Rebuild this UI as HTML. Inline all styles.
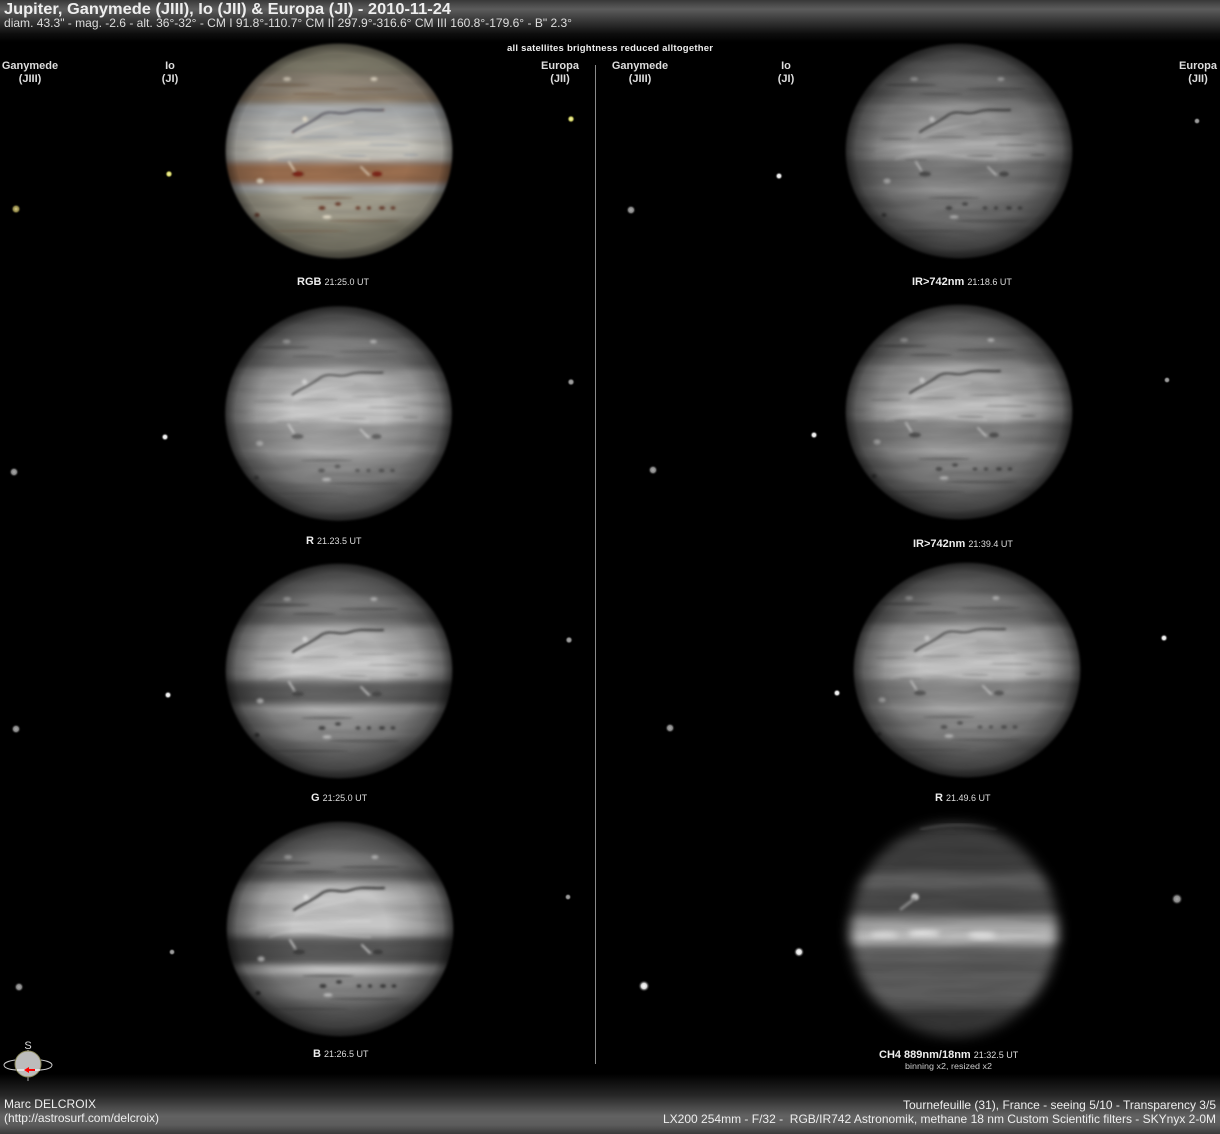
<!DOCTYPE html>
<html><head><meta charset="utf-8"><title>Jupiter, Ganymede, Io &amp; Europa - 2010-11-24</title>
<style>
html,body{margin:0;padding:0;background:#000;width:1220px;height:1134px;overflow:hidden}
svg{display:block}
text{font-family:"Liberation Sans",sans-serif;fill:#eee;white-space:pre}
.b{font-weight:bold}
.l{font-size:11px;font-weight:bold;text-anchor:middle;fill:#ddd}
.c{font-size:11px;font-weight:bold;fill:#eee}
.t{font-size:9px;font-weight:normal;fill:#ddd}
</style></head><body>
<svg xmlns="http://www.w3.org/2000/svg" width="1220" height="1134" viewBox="0 0 1220 1134">
<defs>
<linearGradient id="hd" x1="0" y1="0" x2="0" y2="1">
<stop offset="0" stop-color="#383838"/><stop offset=".22" stop-color="#5c5c5c"/><stop offset=".5" stop-color="#363636"/><stop offset=".8" stop-color="#0e0e0e"/><stop offset="1" stop-color="#000"/>
</linearGradient>
<linearGradient id="ft" x1="0" y1="0" x2="0" y2="1">
<stop offset="0" stop-color="#000"/><stop offset=".35" stop-color="#262626"/><stop offset=".7" stop-color="#626262"/><stop offset=".85" stop-color="#5c5c5c"/><stop offset="1" stop-color="#3a3a3a"/>
</linearGradient>
<radialGradient id="limb">
<stop offset="0" stop-color="#000" stop-opacity="0"/><stop offset=".4" stop-color="#000" stop-opacity="0"/><stop offset=".7" stop-color="#000" stop-opacity=".2"/><stop offset=".88" stop-color="#000" stop-opacity=".46"/><stop offset="1" stop-color="#000" stop-opacity=".85"/>
</radialGradient>
<radialGradient id="limb2">
<stop offset="0" stop-color="#000" stop-opacity="0"/><stop offset=".6" stop-color="#000" stop-opacity="0"/><stop offset=".88" stop-color="#000" stop-opacity=".2"/><stop offset="1" stop-color="#000" stop-opacity=".65"/>
</radialGradient>
<radialGradient id="sw"><stop offset="0" stop-color="#fff"/><stop offset=".45" stop-color="#ddd"/><stop offset="1" stop-color="#000" stop-opacity="0"/></radialGradient>
<radialGradient id="sd"><stop offset="0" stop-color="#aaa"/><stop offset=".5" stop-color="#888"/><stop offset="1" stop-color="#000" stop-opacity="0"/></radialGradient>
<radialGradient id="sy"><stop offset="0" stop-color="#ffffb0"/><stop offset=".5" stop-color="#c8c860"/><stop offset="1" stop-color="#000" stop-opacity="0"/></radialGradient>
<radialGradient id="so"><stop offset="0" stop-color="#d8cc88"/><stop offset=".55" stop-color="#8f8648"/><stop offset="1" stop-color="#000" stop-opacity="0"/></radialGradient>
<filter id="b4" x="-20%" y="-60%" width="140%" height="220%"><feGaussianBlur stdDeviation="3.5"/></filter>
<filter id="b5" x="-20%" y="-60%" width="140%" height="220%"><feGaussianBlur stdDeviation="5"/></filter>
<filter id="b1" x="-30%" y="-30%" width="160%" height="160%"><feGaussianBlur stdDeviation="1.2"/></filter>
<filter id="b3" x="-30%" y="-60%" width="160%" height="220%"><feGaussianBlur stdDeviation="3"/></filter>
<filter id="b6" x="-20%" y="-20%" width="140%" height="140%"><feGaussianBlur stdDeviation="6"/></filter>
<filter id="e" x="-10%" y="-10%" width="120%" height="120%"><feGaussianBlur stdDeviation="1"/></filter>
<filter id="nz" x="0" y="0" width="100%" height="100%">
<feTurbulence type="fractalNoise" baseFrequency="0.015 0.12" numOctaves="2" seed="7"/>
<feColorMatrix values="0 0 0 0 0  0 0 0 0 0  0 0 0 0 0  1.8 0 0 0 -.7"/>
<feGaussianBlur stdDeviation="1"/>
</filter>
<mask id="mp" maskUnits="userSpaceOnUse" x="-130" y="-125" width="260" height="250"><ellipse rx="113.5" ry="107.5" fill="#fff" filter="url(#e)"/></mask>
<mask id="mk" maskUnits="userSpaceOnUse" x="-140" y="-130" width="280" height="260"><ellipse cx="0" cy="0" rx="104" ry="107" fill="#fff" filter="url(#b6)"/></mask>

<g id="dk" fill="currentColor" stroke="none">
<path d="M-46,-19C-38,-25-28,-28-18,-36C-8,-42 0,-35 11,-39C22,-43 32,-40 44,-41" fill="none" stroke="currentColor" stroke-width="2.2" stroke-linecap="round"/>
<ellipse cx="-41" cy="23" rx="6" ry="2.5"/><ellipse cx="38" cy="23" rx="5" ry="2.5"/>
<ellipse cx="-17" cy="57" rx="3.5" ry="2"/><ellipse cx="-1" cy="53" rx="3" ry="1.8"/><ellipse cx="19" cy="57" rx="2.5" ry="1.6"/><ellipse cx="30" cy="57" rx="2" ry="1.6"/><ellipse cx="43" cy="57" rx="3" ry="1.8"/><ellipse cx="54" cy="57" rx="2.5" ry="1.6"/><ellipse cx="-82" cy="64" rx="2.5" ry="2"/>
</g>
<g id="dk2" fill="currentColor" stroke="none" opacity=".55">
<ellipse cx="-55" cy="-66" rx="26" ry="1.6"/><ellipse cx="-25" cy="-57" rx="22" ry="1.6"/><ellipse cx="-12" cy="47" rx="26" ry="1.5"/><ellipse cx="30" cy="-62" rx="30" ry="1.4"/><ellipse cx="-30" cy="80" rx="40" ry="1.4"/><ellipse cx="25" cy="70" rx="36" ry="1.4"/>
</g>
<g id="lt" fill="currentColor" stroke="none" opacity=".85">
<ellipse cx="-34" cy="-32" rx="2.6" ry="2.6" /><ellipse cx="-79" cy="30" rx="3.5" ry="2.6"/><ellipse cx="-52" cy="-72" rx="4" ry="2"/><ellipse cx="35" cy="-72" rx="3.5" ry="2"/><ellipse cx="-12" cy="66" rx="4.5" ry="1.8"/>
<path d="M-50,11L-45,19M22,16L30,24" fill="none" stroke="currentColor" stroke-width="1.8" stroke-linecap="round"/>
<path d="M-44,-14C-30,-20-10,-26 14,-29M-90,0C-50,-8-20,-6 30,-8M-70,8C-40,-6-10,8 30,8" fill="none" stroke="currentColor" stroke-width="2.5" stroke-linecap="round" opacity=".28"/>
</g>
<g id="wk" fill="currentColor" stroke="none" opacity=".45">
<ellipse cx="14" cy="5" rx="14" ry="1.4"/><ellipse cx="72" cy="4" rx="8" ry="1.3"/><ellipse cx="-20" cy="-14" rx="20" ry="1"/><ellipse cx="35" cy="-17" rx="22" ry="1"/><ellipse cx="50" cy="-6" rx="22" ry="1"/><ellipse cx="-50" cy="9" rx="12" ry="1.2"/><ellipse cx="-70" cy="-12" rx="16" ry="1"/>
</g>
<g id="noise"><rect x="-125" y="-115" width="250" height="230" filter="url(#nz)"/></g>
</defs>

<rect width="1220" height="1134" fill="#000"/>
<rect width="1220" height="42" fill="url(#hd)"/>
<rect y="1074" width="1220" height="60" fill="url(#ft)"/>

<!-- RGB -->
<g transform="translate(339,151)"><g mask="url(#mp)"><g filter="url(#b4)">
<rect x="-130" y="-120" width="260" height="240" fill="#8f8b78"/>
<rect x="-130" y="-78" width="260" height="26" fill="#93897a"/>
<rect x="-130" y="-56" width="260" height="7" fill="#8f7d66"/>
<rect x="-130" y="-47" width="260" height="14" fill="#aeb0b2"/>
<rect x="-130" y="-32" width="260" height="42" fill="#b9bab8"/>
<rect x="-130" y="-12" width="260" height="20" fill="#c6c4bc"/>
<rect x="-130" y="11" width="260" height="23" fill="#9a6e50"/>
<rect x="-130" y="35" width="260" height="5" fill="#c6ced4"/>
<rect x="-130" y="44" width="260" height="26" fill="#a29e8e"/>
<rect x="-130" y="72" width="260" height="40" fill="#8a8776"/>
</g>
<g filter="url(#b1)"><use href="#wk" color="#8a93a0"/><use href="#dk2" color="#7a6450"/><use href="#dk" color="#6a3a2a"/><use href="#lt" color="#efe6d2"/>
<ellipse cx="-41" cy="23" rx="5" ry="2.5" fill="#7c2014"/><ellipse cx="38" cy="23" rx="5" ry="2.5" fill="#7c2014"/>
<path d="M-46,-19C-38,-25-28,-28-18,-36C-8,-42 0,-35 11,-39C22,-43 32,-40 44,-41" fill="none" stroke="#6a6c74" stroke-width="2.2"/></g>
<use href="#noise" opacity=".12"/>
<ellipse rx="117" ry="111" fill="url(#limb2)"/>
</g></g>

<!-- R -->
<g transform="translate(338.5,413.5)"><g mask="url(#mp)"><g filter="url(#b4)">
<rect x="-130" y="-120" width="260" height="240" fill="#8c8c8c"/>
<rect x="-130" y="-75" width="260" height="22" fill="#959595"/>
<rect x="-130" y="-58" width="260" height="8" fill="#848484"/>
<rect x="-130" y="-44" width="260" height="55" fill="#b8b8b8"/>
<rect x="-130" y="-20" width="260" height="28" fill="#c6c6c6"/>
<rect x="-130" y="12" width="260" height="22" fill="#9c9c9c"/>
<rect x="-130" y="35" width="260" height="6" fill="#bebebe"/>
<rect x="-130" y="44" width="260" height="26" fill="#969696"/>
<rect x="-130" y="72" width="260" height="40" fill="#868686"/>
</g><g filter="url(#b1)"><use href="#wk" color="#8a8a8a"/><use href="#dk2" color="#666"/><use href="#dk" color="#626262"/><use href="#lt" color="#e4e4e4"/></g><use href="#noise" opacity=".14"/><ellipse rx="117" ry="111" fill="url(#limb)"/></g></g>

<!-- G -->
<g transform="translate(339,671)"><g mask="url(#mp)"><g filter="url(#b4)">
<rect x="-130" y="-120" width="260" height="240" fill="#8a8a8a"/>
<rect x="-130" y="-75" width="260" height="22" fill="#939393"/>
<rect x="-130" y="-58" width="260" height="8" fill="#767676"/>
<rect x="-130" y="-44" width="260" height="52" fill="#b6b6b6"/>
<rect x="-130" y="-20" width="260" height="26" fill="#c8c8c8"/>
<rect x="-130" y="11" width="260" height="23" fill="#626262"/>
<rect x="-130" y="35" width="260" height="6" fill="#bfbfbf"/>
<rect x="-130" y="44" width="260" height="26" fill="#9a9a9a"/>
<rect x="-130" y="72" width="260" height="40" fill="#828282"/>
</g><g filter="url(#b1)"><use href="#wk" color="#8a8a8a"/><use href="#dk2" color="#555"/><use href="#dk" color="#4a4a4a"/><use href="#lt" color="#e4e4e4"/></g><use href="#noise" opacity=".12"/><ellipse rx="117" ry="111" fill="url(#limb)"/></g></g>

<!-- B -->
<g transform="translate(340,929)"><g mask="url(#mp)"><g filter="url(#b4)">
<rect x="-130" y="-120" width="260" height="240" fill="#848484"/>
<rect x="-130" y="-78" width="260" height="26" fill="#909090"/>
<rect x="-130" y="-60" width="260" height="10" fill="#6c6c6c"/>
<rect x="-130" y="-46" width="260" height="52" fill="#bababa"/>
<rect x="-130" y="-38" width="260" height="12" fill="#cacaca"/>
<rect x="-130" y="-14" width="260" height="18" fill="#c6c6c6"/>
<rect x="-130" y="9" width="260" height="26" fill="#585858"/>
<rect x="-130" y="38" width="260" height="6" fill="#dadada"/>
<rect x="-130" y="47" width="260" height="24" fill="#929292"/>
<rect x="-130" y="74" width="260" height="40" fill="#727272"/>
</g><g filter="url(#b1)"><use href="#dk2" color="#555"/><use href="#dk" color="#3c3c3c"/><use href="#lt" color="#e8e8e8"/></g><use href="#noise" opacity=".08"/><ellipse rx="117" ry="111" fill="url(#limb)"/></g></g>

<!-- IR1 -->
<g transform="translate(959,151)"><g mask="url(#mp)"><g filter="url(#b4)">
<rect x="-130" y="-120" width="260" height="240" fill="#828282"/>
<rect x="-130" y="-62" width="260" height="10" fill="#767676"/>
<rect x="-130" y="-48" width="260" height="56" fill="#969696"/>
<rect x="-130" y="-14" width="260" height="22" fill="#a6a6a6"/>
<rect x="-130" y="11" width="260" height="23" fill="#7a7a7a"/>
<rect x="-130" y="34" width="260" height="8" fill="#969696"/>
<rect x="-130" y="44" width="260" height="30" fill="#808080"/>
<rect x="-130" y="76" width="260" height="40" fill="#767676"/>
</g><g filter="url(#b1)" transform="translate(7,0)"><use href="#wk" color="#555"/><use href="#dk2" color="#555"/><use href="#dk" color="#4a4a4a"/><use href="#lt" color="#cfcfcf"/></g><use href="#noise" opacity=".16"/><ellipse rx="117" ry="111" fill="url(#limb)"/></g></g>

<!-- IR2 -->
<g transform="translate(959,412)"><g mask="url(#mp)"><g filter="url(#b4)">
<rect x="-130" y="-120" width="260" height="240" fill="#8c8c8c"/>
<rect x="-130" y="-62" width="260" height="10" fill="#828282"/>
<rect x="-130" y="-48" width="260" height="56" fill="#aaaaaa"/>
<rect x="-130" y="-16" width="260" height="24" fill="#bcbcbc"/>
<rect x="-130" y="11" width="260" height="23" fill="#868686"/>
<rect x="-130" y="34" width="260" height="8" fill="#a6a6a6"/>
<rect x="-130" y="44" width="260" height="30" fill="#8c8c8c"/>
<rect x="-130" y="76" width="260" height="40" fill="#7c7c7c"/>
</g><g filter="url(#b1)" transform="translate(-3,0)"><use href="#wk" color="#666"/><use href="#dk2" color="#555"/><use href="#dk" color="#505050"/><use href="#lt" color="#dcdcdc"/></g><use href="#noise" opacity=".16"/><ellipse rx="117" ry="111" fill="url(#limb)"/></g></g>

<!-- R2 -->
<g transform="translate(967,670)"><g mask="url(#mp)"><g filter="url(#b4)">
<rect x="-130" y="-120" width="260" height="240" fill="#868686"/>
<rect x="-130" y="-75" width="260" height="20" fill="#909090"/>
<rect x="-130" y="-58" width="260" height="8" fill="#7a7a7a"/>
<rect x="-130" y="-44" width="260" height="54" fill="#b2b2b2"/>
<rect x="-130" y="-18" width="260" height="26" fill="#c0c0c0"/>
<rect x="-130" y="12" width="260" height="22" fill="#8a8a8a"/>
<rect x="-130" y="35" width="260" height="6" fill="#b4b4b4"/>
<rect x="-130" y="44" width="260" height="26" fill="#929292"/>
<rect x="-130" y="72" width="260" height="40" fill="#7a7a7a"/>
</g><g filter="url(#b1)" transform="translate(-6,0)"><use href="#wk" color="#7a7a7a"/><use href="#dk2" color="#5e5e5e"/><use href="#dk" color="#5a5a5a"/><use href="#lt" color="#dedede"/></g><use href="#noise" opacity=".14"/><ellipse rx="117" ry="111" fill="url(#limb)"/></g></g>

<!-- CH4 -->
<g transform="translate(954,930)"><g mask="url(#mk)"><g filter="url(#b5)">
<rect x="-130" y="-120" width="260" height="240" fill="#3a3a3a"/>
<rect x="-130" y="-95" width="260" height="35" fill="#3e3e3e"/>
<rect x="-130" y="-56" width="260" height="14" fill="#626262"/>
<rect x="-130" y="-40" width="260" height="26" fill="#474747"/>
<rect x="-130" y="-12" width="260" height="15" fill="#a0a0a0"/>
<rect x="-130" y="3" width="260" height="10" fill="#cccccc"/>
<rect x="-130" y="17" width="260" height="18" fill="#5e5e5e"/>
<rect x="-130" y="38" width="260" height="38" fill="#5c5c5c"/>
<rect x="-130" y="78" width="260" height="40" fill="#343434"/>
</g>
<path d="M-34,-101Q4,-110 43,-101" fill="none" stroke="#6a6a6a" stroke-width="3" filter="url(#b1)"/>
<g filter="url(#b1)"><ellipse cx="-39" cy="-33" rx="4" ry="3.5" fill="#c8c8c8"/><path d="M-40,-31L-53,-21" stroke="#858585" stroke-width="3" stroke-linecap="round"/></g>
<g filter="url(#b3)"><ellipse cx="-30" cy="4" rx="16" ry="3" fill="#eee"/><ellipse cx="-70" cy="5" rx="14" ry="3" fill="#ddd"/><ellipse cx="28" cy="5" rx="14" ry="3" fill="#e6e6e6"/></g>
<use href="#noise" opacity=".1"/></g></g>

<!-- satellites -->
<circle cx="16" cy="209" r="5" fill="url(#so)"/><circle cx="169" cy="174" r="4" fill="url(#sy)"/><circle cx="571" cy="119" r="4" fill="url(#sy)"/>
<circle cx="14" cy="472" r="5" fill="url(#sd)"/><circle cx="165" cy="437" r="4" fill="url(#sw)"/><circle cx="571" cy="382" r="4" fill="url(#sd)"/>
<circle cx="16" cy="729" r="5" fill="url(#sd)"/><circle cx="168" cy="695" r="4" fill="url(#sw)"/><circle cx="569" cy="640" r="4" fill="url(#sd)"/>
<circle cx="19" cy="987" r="5" fill="url(#sd)"/><circle cx="172" cy="952" r="3.5" fill="url(#sd)"/><circle cx="568" cy="897" r="3.5" fill="url(#sd)"/>
<circle cx="631" cy="210" r="5" fill="url(#sd)"/><circle cx="779" cy="176" r="4" fill="url(#sw)"/><circle cx="1197" cy="121" r="3.5" fill="url(#sd)"/>
<circle cx="653" cy="470" r="5" fill="url(#sd)"/><circle cx="814" cy="435" r="4" fill="url(#sw)"/><circle cx="1167" cy="380" r="3.5" fill="url(#sd)"/>
<circle cx="670" cy="728" r="5" fill="url(#sd)"/><circle cx="837" cy="693" r="4" fill="url(#sw)"/><circle cx="1164" cy="638" r="4" fill="url(#sw)"/>
<circle cx="644" cy="986" r="6" fill="url(#sw)"/><circle cx="799" cy="952" r="5.5" fill="url(#sw)"/><circle cx="1177" cy="899" r="6" fill="url(#sd)"/>

<line x1="595.5" y1="65" x2="595.5" y2="1064" stroke="#8a8a8a"/>

<!-- header -->
<text x="4" y="14" class="b" font-size="16" textLength="447" lengthAdjust="spacingAndGlyphs" style="fill:#eee">Jupiter, Ganymede (JIII), Io (JII) &amp; Europa (JI) - 2010-11-24</text>
<text x="4" y="27" font-size="12" textLength="568" lengthAdjust="spacingAndGlyphs" style="fill:#ddd">diam. 43.3" - mag. -2.6 - alt. 36°-32° - CM I 91.8°-110.7° CM II 297.9°-316.6° CM III 160.8°-179.6° - B" 2.3°</text>
<text x="507" y="51" class="b" font-size="9.5" textLength="206" lengthAdjust="spacing">all satellites brightness reduced alltogether</text>

<text class="l" x="30" y="69">Ganymede</text><text class="l" x="30" y="82">(JIII)</text>
<text class="l" x="170" y="69">Io</text><text class="l" x="170" y="82">(JI)</text>
<text class="l" x="560" y="69">Europa</text><text class="l" x="560" y="82">(JII)</text>
<text class="l" x="640" y="69">Ganymede</text><text class="l" x="640" y="82">(JIII)</text>
<text class="l" x="786" y="69">Io</text><text class="l" x="786" y="82">(JI)</text>
<text class="l" x="1198" y="69">Europa</text><text class="l" x="1198" y="82">(JII)</text>

<!-- captions -->
<text class="c" x="297" y="285">RGB <tspan class="t">21:25.0 UT</tspan></text>
<text class="c" x="306" y="544">R <tspan class="t">21.23.5 UT</tspan></text>
<text class="c" x="311" y="801">G <tspan class="t">21:25.0 UT</tspan></text>
<text class="c" x="313" y="1057">B <tspan class="t">21:26.5 UT</tspan></text>
<text class="c" x="912" y="285">IR&gt;742nm <tspan class="t">21:18.6 UT</tspan></text>
<text class="c" x="913" y="547">IR&gt;742nm <tspan class="t">21:39.4 UT</tspan></text>
<text class="c" x="935" y="801">R <tspan class="t">21.49.6 UT</tspan></text>
<text class="c" x="879" y="1058">CH4 889nm/18nm <tspan class="t">21:32.5 UT</tspan></text>
<text x="905" y="1069" font-size="8.5" textLength="87" lengthAdjust="spacingAndGlyphs" style="fill:#ccc">binning x2, resized x2</text>

<!-- orientation icon -->
<g>
<text x="28" y="1049" font-size="11" text-anchor="middle" style="fill:#ddd">S</text>
<line x1="28" y1="1050" x2="28" y2="1053" stroke="#ccc"/>
<line x1="28" y1="1077" x2="28" y2="1081" stroke="#aaa"/>
<path d="M15,1060C8,1061 4,1063 4,1065C4,1068 10,1070 18,1070M41,1060C48,1061 52,1063 52,1065C52,1068 46,1070 38,1070" fill="none" stroke="#ccc"/>
<circle cx="28" cy="1064" r="13" fill="#bcbcbc" stroke="#8d8a5c"/>
<line x1="17" y1="1070" x2="40" y2="1070" stroke="#eee" stroke-width="1.5"/>
<path d="M24,1070L29,1067V1069H35V1071H29V1073Z" fill="#f00"/>
</g>

<!-- footer -->
<text x="4" y="1108" font-size="12" textLength="92" lengthAdjust="spacing">Marc DELCROIX</text>
<text x="4" y="1122" font-size="12" textLength="155" lengthAdjust="spacing">(http://astrosurf.com/delcroix)</text>
<text x="903" y="1109" font-size="12" textLength="313" lengthAdjust="spacing">Tournefeuille (31), France - seeing 5/10 - Transparency 3/5</text>
<text x="663" y="1123" font-size="12" textLength="553" lengthAdjust="spacing">LX200 254mm - F/32 -  RGB/IR742 Astronomik, methane 18 nm Custom Scientific filters - SKYnyx 2-0M</text>
</svg>
</body></html>
